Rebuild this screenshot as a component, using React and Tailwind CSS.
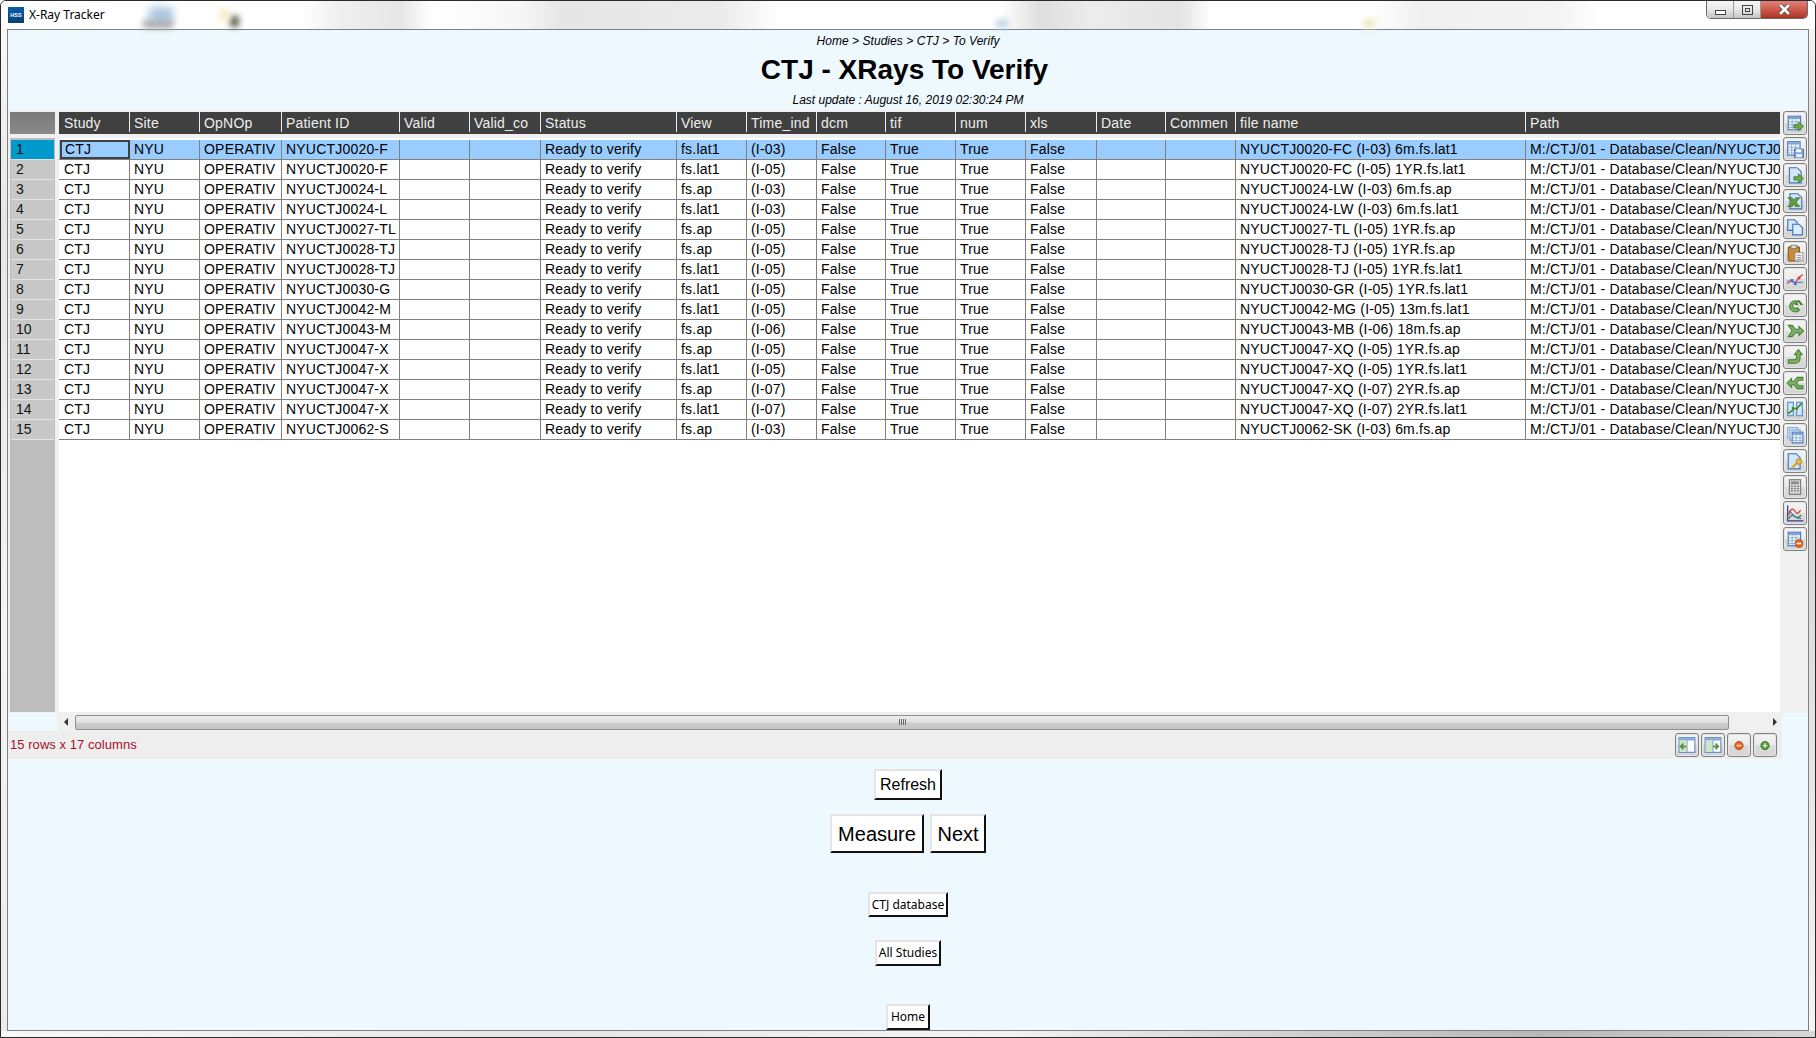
const ARIAL = 'font-["Liberation_Sans",Arial,sans-serif]';

const GRID = 'grid grid-cols-[71px_70px_82px_118px_70px_71px_136px_70px_70px_69px_70px_70px_71px_69px_70px_290px_254px]';

const COLUMNS = ['Study', 'Site', 'OpNOp', 'Patient ID', 'Valid', 'Valid_co', 'Status', 'View', 'Time_ind', 'dcm', 'tif', 'num', 'xls', 'Date', 'Commen', 'file name', 'Path'];

const ROWS = [
  ['NYUCTJ0020-F', 'fs.lat1', '(I-03)', 'NYUCTJ0020-FC (I-03) 6m.fs.lat1'],
  ['NYUCTJ0020-F', 'fs.lat1', '(I-05)', 'NYUCTJ0020-FC (I-05) 1YR.fs.lat1'],
  ['NYUCTJ0024-L', 'fs.ap', '(I-03)', 'NYUCTJ0024-LW (I-03) 6m.fs.ap'],
  ['NYUCTJ0024-L', 'fs.lat1', '(I-03)', 'NYUCTJ0024-LW (I-03) 6m.fs.lat1'],
  ['NYUCTJ0027-TL', 'fs.ap', '(I-05)', 'NYUCTJ0027-TL (I-05) 1YR.fs.ap'],
  ['NYUCTJ0028-TJ', 'fs.ap', '(I-05)', 'NYUCTJ0028-TJ (I-05) 1YR.fs.ap'],
  ['NYUCTJ0028-TJ', 'fs.lat1', '(I-05)', 'NYUCTJ0028-TJ (I-05) 1YR.fs.lat1'],
  ['NYUCTJ0030-G', 'fs.lat1', '(I-05)', 'NYUCTJ0030-GR (I-05) 1YR.fs.lat1'],
  ['NYUCTJ0042-M', 'fs.lat1', '(I-05)', 'NYUCTJ0042-MG (I-05) 13m.fs.lat1'],
  ['NYUCTJ0043-M', 'fs.ap', '(I-06)', 'NYUCTJ0043-MB (I-06) 18m.fs.ap'],
  ['NYUCTJ0047-X', 'fs.ap', '(I-05)', 'NYUCTJ0047-XQ (I-05) 1YR.fs.ap'],
  ['NYUCTJ0047-X', 'fs.lat1', '(I-05)', 'NYUCTJ0047-XQ (I-05) 1YR.fs.lat1'],
  ['NYUCTJ0047-X', 'fs.ap', '(I-07)', 'NYUCTJ0047-XQ (I-07) 2YR.fs.ap'],
  ['NYUCTJ0047-X', 'fs.lat1', '(I-07)', 'NYUCTJ0047-XQ (I-07) 2YR.fs.lat1'],
  ['NYUCTJ0062-S', 'fs.ap', '(I-03)', 'NYUCTJ0062-SK (I-03) 6m.fs.ap'],
];

// ── Toolbar icons ─────────────────────────────────────────────────────────────

const GreenArrow = ({ x = 0, y = 0 }) => (
  <path transform={`translate(${x} ${y})`} d="M7 9.500h4V7l4.500 4-4.500 4v-2.500H7z" fill="#6aa84f" stroke="#3d7a2b" strokeWidth=".7" />
);

const Sheet = ({ x = 1.5, y = 1.5, w = 11, h = 12 }) => (
  <g transform={`translate(${x} ${y})`}>
    <rect x=".5" y=".5" width={w} height={h} fill="#eef4fc" stroke="#4a78bc" />
    <rect x="1" y="1" width={w - 1} height="2" fill="#7ea5da" />
    <path d={`M1 5.5h${w - 1}M1 8h${w - 1}M1 10.5h${w - 1}M4 3v${h - 3}M7.5 3v${h - 3}`} stroke="#86a5d2" strokeWidth=".7" />
  </g>
);

const Doc = ({ x = 2.5, y = 1 }) => (
  <path transform={`translate(${x} ${y})`} d="M.5.5h7l3.5 3.5v10H.5z" fill="#d2e5f9" stroke="#3f72ba" />
);

const ICONS = {
  tableOut: <><Sheet /><GreenArrow /></>,
  tableSave: (
    <>
      <Sheet x={1} y={1} />
      <rect x="7.5" y="8" width="8" height="7.5" fill="#7fa6dc" stroke="#46699f" strokeWidth=".7" />
      <rect x="9" y="8.3" width="4.5" height="2.6" fill="#fff" />
      <rect x="9" y="12.5" width="5" height="3" fill="#e8eef7" />
    </>
  ),
  docOut: <><Doc /><GreenArrow /></>,
  excel: (
    <>
      <Doc x={3} />
      <path d="M1.5 5h4l1.5 2 1.5-2h4l-3.5 4 3.5 4H8.5L7 11l-1.5 2h-4L5 9z" fill="#5f9a3d" stroke="#3c6d25" strokeWidth=".5" />
    </>
  ),
  copy: (
    <>
      <path d="M1.5 1.5h6l2.5 2.5v7H1.5z" fill="#d2e5f9" stroke="#3f72ba" />
      <path d="M6 5.5h5.5l3 3v6.5H6z" fill="#dfecfb" stroke="#3f72ba" />
    </>
  ),
  paste: (
    <>
      <rect x="2" y="2.5" width="10" height="12.5" rx="1" fill="#c98a3c" stroke="#8a5a20" />
      <rect x="4.5" y="1" width="5" height="3" fill="#d8d8d8" stroke="#777" strokeWidth=".7" />
      <rect x="8" y="7.5" width="7" height="7.5" fill="#f6f6f6" stroke="#8a8a8a" strokeWidth=".7" />
      <path d="M9.5 10h4M9.5 12h4M9.5 13.6h4" stroke="#777" strokeWidth=".7" />
    </>
  ),
  trend: (
    <>
      <path d="M1 12l4-3 3 3 3-5 4-3" fill="none" stroke="#e0403a" strokeWidth="1.2" />
      <path d="M1 9.5l4 1 3 .5 4 0 3 0" fill="none" stroke="#5b86c4" strokeWidth="1" />
      <rect x="4" y="8" width="2.4" height="2.4" fill="#3f6fc0" />
      <rect x="7" y="11" width="2.4" height="2.4" fill="#3f6fc0" />
      <rect x="10.4" y="6" width="2.4" height="2.4" fill="#e0403a" />
    </>
  ),
  loop: (
    <path d="M13 7.5a5 5 0 1 0-1 5l-2-2a2.4 2.4 0 1 1 .4-3H8.5l3-3.5 3 3.5z" fill="#7fb069" stroke="#42802f" strokeWidth=".9" />
  ),
  merge: (
    <path d="M2 3h3.5l3 3.5h3V4l4 4-4 4V9.5h-3L5.5 13H2l3.5-5z" fill="#7fb069" stroke="#42802f" strokeWidth=".9" />
  ),
  curve: (
    <path d="M2 10.5h5.5c1.5 0 2-1 2-2V6H7.5L11 1.5 14.500 6h-2v3c0 3-2 4.500-4.500 4.500H2z" fill="#7fb069" stroke="#42802f" strokeWidth=".9" />
  ),
  branch: (
    <path d="M15 3v2.500h-3.500L9.500 8l2 2.500H15V13h-5L7 9.500H5V12L1 8l4-4v2.500h2L10 3z" fill="#7fb069" stroke="#42802f" strokeWidth=".9" />
  ),
  split: (
    <>
      <rect x="1.500" y="2" width="5" height="12" fill="#d2e5f9" stroke="#5a8ccb" />
      <rect x="9.500" y="2" width="5" height="12" fill="#d2e5f9" stroke="#5a8ccb" />
      <path d="M2 12l4-3v-2l4 1v-1l4-4" fill="none" stroke="#3d8a2b" strokeWidth="1.500" />
    </>
  ),
  stack: (
    <>
      <rect x="1.500" y="1.500" width="9" height="9" fill="#e6f0fb" stroke="#7fa3d4" />
      <rect x="3.500" y="3.500" width="9" height="9" fill="#e6f0fb" stroke="#7fa3d4" />
      <Sheet x={5} y={5} w={9.500} h={9.500} />
    </>
  ),
  docKey: (
    <>
      <Doc x={1.500} />
      <path d="M5 14.500l5-5" stroke="#d9a520" strokeWidth="2" />
      <circle cx="11.500" cy="8.500" r="2.500" fill="#e8bd45" stroke="#a87c12" strokeWidth=".7" />
    </>
  ),
  calc: (
    <>
      <rect x="3" y="1.500" width="10" height="13" fill="#d5d5d5" stroke="#7a7a7a" />
      <rect x="4.500" y="3" width="7" height="2.500" fill="#8c8c8c" />
      <path d="M4.500 7.500h7M4.500 9.500h7M4.500 11.500h7" stroke="#6f6f6f" strokeWidth="1.100" strokeDasharray="1.500 1.200" />
    </>
  ),
  chart: (
    <>
      <path d="M1.500 1v14h14" fill="none" stroke="#3a3a8c" strokeWidth="1.100" />
      <path d="M2.500 9.500c2-6 4-6 5.500-3s3 2 5-1" fill="none" stroke="#d83a34" strokeWidth="1.200" />
      <path d="M2.500 13c2-3 3-4 5-2s4 1 6-1" fill="none" stroke="#3d8a2b" strokeWidth="1.200" />
      <path d="M2.500 6c2 1 3 3 5 5s4 2 6 2" fill="none" stroke="#3f6fc0" strokeWidth="1" />
    </>
  ),
  tableMinus: (
    <>
      <Sheet />
      <circle cx="11.500" cy="12" r="3.500" fill="#e8641e" stroke="#b34310" strokeWidth=".6" />
      <rect x="9.500" y="11.300" width="4" height="1.400" fill="#fff" />
    </>
  ),
  panelLeft: (
    <>
      <rect x="1" y="1.500" width="14" height="13" fill="#fff" stroke="#5b86c4" />
      <rect x="1.500" y="2" width="13" height="2" fill="#7fa6dc" />
      <rect x="1.500" y="4" width="6" height="10" fill="#cfe6c4" />
      <path d="M7 9H4.500V6.500L1.500 9.300 4.500 12V9.800H7z" fill="#5f9a3d" stroke="#3c6d25" strokeWidth=".5" />
      <path d="M8 4v10" stroke="#5b86c4" strokeWidth=".8" />
    </>
  ),
  panelRight: (
    <>
      <rect x="1" y="1.500" width="14" height="13" fill="#fff" stroke="#5b86c4" />
      <rect x="1.500" y="2" width="13" height="2" fill="#7fa6dc" />
      <rect x="1.500" y="4" width="6" height="10" fill="#cfe6c4" />
      <path d="M8 9h2.500V6.500l3 2.800-3 2.700V9.800H8z" fill="#5f9a3d" stroke="#3c6d25" strokeWidth=".5" />
      <path d="M8 4v10" stroke="#5b86c4" strokeWidth=".8" />
    </>
  ),
  minus: (
    <>
      <circle cx="8" cy="8.500" r="3.700" fill="#e8641e" stroke="#b34310" strokeWidth=".7" />
      <rect x="6" y="7.800" width="4" height="1.400" fill="#fde3d2" />
    </>
  ),
  plus: (
    <>
      <circle cx="8" cy="8.500" r="3.700" fill="#58963a" stroke="#356f20" strokeWidth=".7" />
      <path d="M6 8.500h4M8 6.500v4" stroke="#eaf5e2" strokeWidth="1.200" />
    </>
  ),
};

const SIDE_TOOLS = ['tableOut', 'tableSave', 'docOut', 'excel', 'copy', 'paste', 'trend', 'loop', 'merge', 'curve', 'branch', 'split', 'stack', 'docKey', 'calc', 'chart', 'tableMinus'];
const BOTTOM_TOOLS = ['panelLeft', 'panelRight', 'minus', 'plus'];

function ToolButton({ name }) {
  return (
    <div className="w-6 h-6 flex items-center justify-center rounded-[3px] border border-[#808080] shadow-[inset_0_0_0_1px_#e4e4e4] bg-[linear-gradient(#f4f4f4,#ececec_48%,#dcdcdc_52%,#d4d4d4)]">
      <svg viewBox="0 0 16 16" className="w-[18px] h-[18px]">{ICONS[name]}</svg>
    </div>
  );
}

// ── Table ─────────────────────────────────────────────────────────────────────

function TableRow({ row, selected }) {
  const [patient, view, time, file] = row;
  const cells = ['CTJ', 'NYU', 'OPERATIV', patient, '', '', 'Ready to verify', view, time, 'False', 'True', 'True', 'False', '', '', file, 'M:/CTJ/01 - Database/Clean/NYUCTJ0'];
  return (
    <div className={`${GRID} h-5 border-b border-[#808080] tracking-[0.2px] ${selected ? 'bg-[#99ccff]' : 'bg-white'}`}>
      {cells.map((text, i) => {
        const focus = selected && i === 0;
        return (
          <div
            key={i}
            className={`overflow-hidden whitespace-nowrap ${
              focus
                ? 'border-2 border-[#404040] leading-[14px] pl-[3px] ml-px'
                : i === 0
                  ? 'leading-[19px] border-r border-[#808080] pl-[5px]'
                  : i === 16
                    ? 'leading-[19px] pl-[4px]'
                    : 'leading-[19px] border-r border-[#808080] pl-[4px]'
            }`}
          >
            {text}
          </div>
        );
      })}
    </div>
  );
}

function Table() {
  return (
    <div className="flex h-[603px] bg-[#f0f0f0]">
      {/* row numbers */}
      <div className="w-[45px] ml-[2px] mt-[2px] mb-px flex flex-col">
        <div className="h-[22px] shrink-0 bg-[linear-gradient(#7a7a7a,#8a8a8a)]" />
        <div className="mt-1 flex-1 bg-[#bdbdbd] pt-[2px] pl-px pr-px">
          {ROWS.map((_, i) => (
            <div key={i} className={`h-5 pl-[5px] leading-[19px] border-b border-[#e4e4e4] text-[#111] ${i === 0 ? 'bg-[#0099cc]' : 'bg-[#c8c8c8]'}`}>
              {i + 1}
            </div>
          ))}
        </div>
      </div>

      {/* data */}
      <div className="w-[1721px] ml-1 mt-[2px] mb-px flex flex-col overflow-hidden">
        <div className={`${GRID} h-[22px] shrink-0 bg-[#404040] text-[#eeeeee] tracking-[0.2px]`}>
          {COLUMNS.map((c, i) => (
            <div key={c} className={`h-5 leading-[22px] whitespace-nowrap overflow-hidden ${i === 0 ? 'pl-[5px] border-r border-[#eeeeee]' : i === 16 ? 'pl-[4px]' : 'pl-[4px] border-r border-[#eeeeee]'}`}>
              {c}
            </div>
          ))}
        </div>
        <div className="mt-1 flex-1 bg-white pt-[2px]">
          {ROWS.map((row, i) => <TableRow key={i} row={row} selected={i === 0} />)}
        </div>
      </div>

      {/* side toolbar */}
      <div className="ml-[3px] mt-px flex flex-col gap-[2px]">
        {SIDE_TOOLS.map((t) => <ToolButton key={t} name={t} />)}
      </div>
    </div>
  );
}

function ScrollBar() {
  return (
    <div className="ml-[49px] w-[1725px] h-[18px] shrink-0 flex items-center bg-[#f0f0f0]">
      <div className="w-[18px] h-full flex items-center justify-center">
        <div className="w-0 h-0 border-y-[4px] border-y-transparent border-r-[4px] border-r-[#333]" />
      </div>
      <div className="w-[1654px] h-[15px] flex items-center justify-center rounded-[2px] border border-[#8f8f8f] bg-[linear-gradient(#ededed,#e2e2e2_45%,#cfcfcf_55%,#c4c4c4)]">
        <div className="w-[7px] h-[6px] bg-[repeating-linear-gradient(90deg,#666_0_1px,transparent_1px_2px)]" />
      </div>
      <div className="flex-1 h-full flex items-center justify-end pr-[5px]">
        <div className="w-0 h-0 border-y-[4px] border-y-transparent border-l-[4px] border-l-[#333]" />
      </div>
    </div>
  );
}

function WebButton({ label, className }) {
  return (
    <div className={`flex items-center justify-center border-2 border-t-[#e4e4e4] border-l-[#e4e4e4] border-r-[#111] border-b-[#111] bg-white text-black ${className}`}>
      {label}
    </div>
  );
}

// ── Page ──────────────────────────────────────────────────────────────────────

export default function App() {
  return (
    <div className={`${ARIAL} w-[1816px] h-[1038px] overflow-hidden flex flex-col border border-[#2a2a2a] rounded-t-[6px] bg-[#f6f6f6] text-[14px]`}>
      {/* title bar, with the blurred desktop showing through the glass */}
      <div className="relative h-[28px] shrink-0 flex justify-between bg-[linear-gradient(90deg,#ffffff_0,#ffffff_300px,#efefef_340px,#e6e6e6_400px,#ffffff_430px,#f6f6f6_520px,#e6e6e6_560px,#ebebeb_720px,#ffffff_780px,#ffffff_1000px,#dedede_1040px,#ececec_1090px,#e4e4e4_1180px,#ffffff_1210px,#ffffff_1370px,#f0f0f0_1420px,#f4f4f4_1560px,#ffffff_1600px)]">
        <div className="absolute left-[148px] top-[6px] w-[24px] h-[16px] bg-[#a9c6e2] blur-[4px]" />
        <div className="absolute left-[142px] top-[19px] w-[30px] h-[8px] bg-[#a8a8ac] blur-[3px]" />
        <div className="absolute left-[229px] top-[15px] w-[9px] h-[11px] bg-[#5f5f52] blur-[3px]" />
        <div className="absolute left-[218px] top-[8px] w-[10px] h-[12px] bg-[#f4efc4] blur-[3px]" />
        <div className="absolute left-[995px] top-[18px] w-[12px] h-[9px] bg-[#c3d3e4] blur-[3px]" />
        <div className="absolute left-[1362px] top-[18px] w-[12px] h-[9px] bg-[#ece8c0] blur-[3px]" />
        <div className="relative flex items-center pl-[7px]">
          <div className="w-4 h-4 flex items-center justify-center bg-[linear-gradient(#0a5ea8,#0a3f7a)] text-white text-[5.5px] font-bold">HSS</div>
          <span className='ml-[5px] text-[12px] text-black font-["Noto_Sans",sans-serif]'>X-Ray Tracker</span>
        </div>
        <div className="relative flex items-start mr-[7px] h-[18px] rounded-b-[5px] border border-t-0 border-[#6a6a6a] overflow-hidden">
          <div className="w-[27px] h-full flex items-end justify-center pb-[3px] border-r border-[#9a9a9a] bg-[linear-gradient(#f6f6f6,#e8e8e8_50%,#c4c4c4)]">
            <div className="w-[11px] h-[5px] border border-[#444] bg-white" />
          </div>
          <div className="w-[27px] h-full flex items-center justify-center border-r border-[#9a9a9a] bg-[linear-gradient(#f6f6f6,#e8e8e8_50%,#c4c4c4)]">
            <div className="w-[11px] h-[10px] border border-[#444] flex items-center justify-center">
              <div className="w-[5px] h-[4px] border border-[#444]" />
            </div>
          </div>
          <div className="w-[46px] h-full flex items-center justify-center bg-[linear-gradient(#dc8478,#cf5a4c_50%,#a83424)]">
            <svg viewBox="0 0 12 12" className="w-[13px] h-[13px]">
              <path d="M2 2l8 8M10 2l-8 8" stroke="#555" strokeWidth="4" />
              <path d="M2 2l8 8M10 2l-8 8" stroke="#fff" strokeWidth="2.500" />
            </svg>
          </div>
        </div>
      </div>

      <div className="flex h-[1002px] shrink-0">
        <div className="w-[6px] bg-[linear-gradient(#f8f8f8,#e6e6e6_20%,#f4f4f4_60%,#ececec)]" />

        {/* client area */}
        <div className="w-[1802px] border border-[#808080] bg-[#edf8ff] flex flex-col overflow-hidden">
          <div className="h-[80px] shrink-0 flex flex-col items-center text-black">
            <div className="mt-[4px] h-[15px] leading-[15px] text-[12px] italic tracking-[0.05px]">Home &gt; Studies &gt; CTJ &gt; To Verify</div>
            <div className="mt-[4px] mr-[7px] h-[34px] leading-[34px] text-[28px] font-bold">CTJ - XRays To Verify</div>
            <div className="mt-[6px] h-[15px] leading-[15px] text-[12px] italic">Last update : August 16, 2019 02:30:24 PM</div>
          </div>

          <Table />
          <ScrollBar />

          <div className="w-[1774px] h-[28px] shrink-0 flex items-center justify-between bg-[#eeeeee] pl-[2px] pr-[5px]">
            <span className="text-[13px] text-[#aa0f2d] tracking-[0.05px]">15 rows x 17 columns</span>
            <div className="flex gap-[2px]">
              {BOTTOM_TOOLS.map((t) => <ToolButton key={t} name={t} />)}
            </div>
          </div>

          <div className="flex flex-col items-center">
            <WebButton label="Refresh" className="mt-[10px] w-[68px] h-[31px] text-[16px]" />
            <div className="mt-[14px] flex gap-[6px]">
              <WebButton label="Measure" className="w-[94px] h-[39px] text-[20px]" />
              <WebButton label="Next" className="w-[56px] h-[39px] text-[20px]" />
            </div>
            <WebButton label="CTJ database" className='mt-[39px] w-[80px] h-[25px] text-[12px] font-["Noto_Sans",sans-serif]' />
            <WebButton label="All Studies" className='mt-[23px] w-[66px] h-[26px] text-[12px] font-["Noto_Sans",sans-serif]' />
            <WebButton label="Home" className='mt-[38px] w-[44px] h-[26px] text-[12px] font-["Noto_Sans",sans-serif]' />
          </div>
        </div>

        <div className="w-[6px] bg-[linear-gradient(#f4f4f4,#cfcfcf_18%,#e8efe6_35%,#d8d8d8_50%,#f4f4f4)]" />
      </div>

      {/* bottom frame */}
      <div className="flex-1 bg-[linear-gradient(90deg,#f8f8f8,#e6e6e6_30%,#f4f4f4_55%,#cfcfcf_72%,#b8b8b8_85%,#d8d8d8)]" />
    </div>
  );
}
